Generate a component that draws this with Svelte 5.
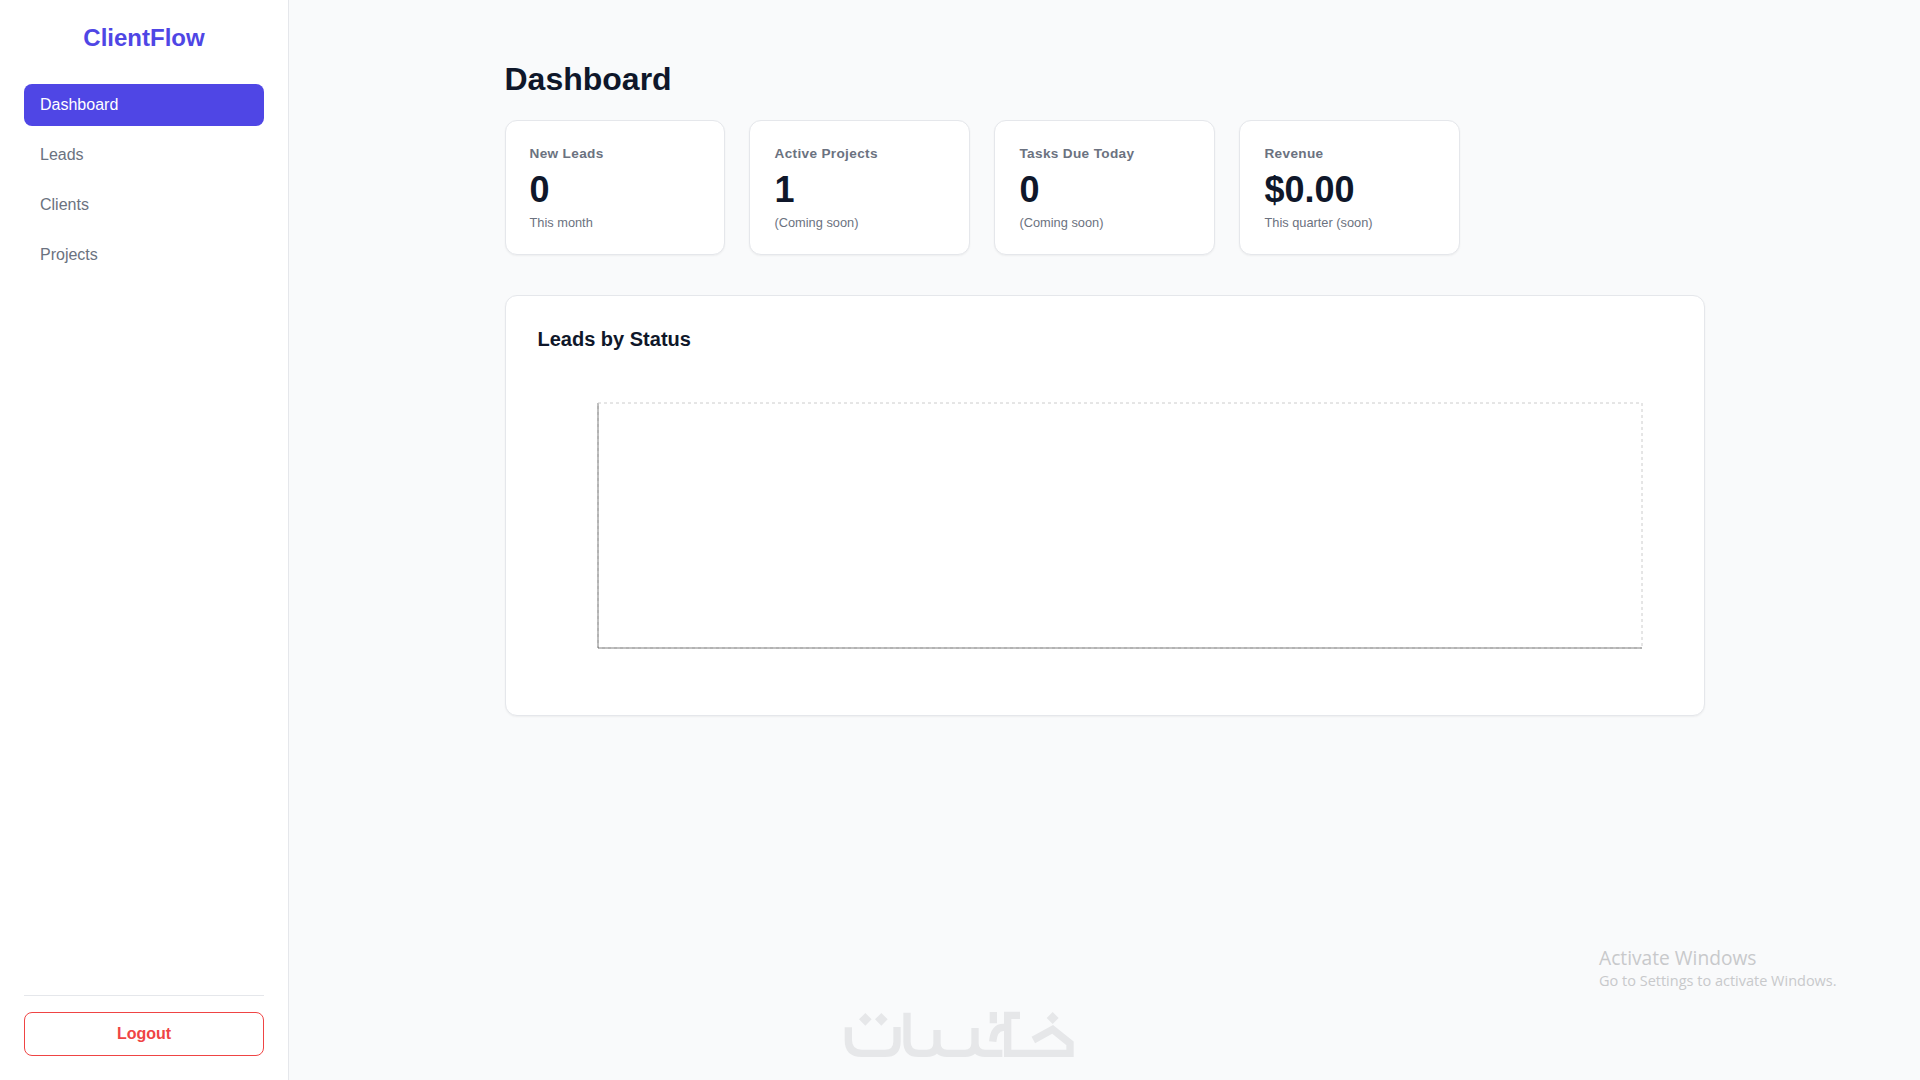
<script>
  const stats = [
    { label: "New Leads", value: "0", note: "This month" },
    { label: "Active Projects", value: "1", note: "(Coming soon)" },
    { label: "Tasks Due Today", value: "0", note: "(Coming soon)" },
    { label: "Revenue", value: "$0.00", note: "This quarter (soon)" },
  ];
  const links = ["Dashboard", "Leads", "Clients", "Projects"];
  let current = "Dashboard";
</script>

<div class="layout">
  <aside class="sidebar">
    <div class="brand">ClientFlow</div>
    <nav class="nav">
      {#each links as link}
        <a href="#{link}" class:active={link === current} on:click|preventDefault={() => (current = link)}>{link}</a>
      {/each}
    </nav>
    <div class="sidebar-foot">
      <button class="logout">Logout</button>
    </div>
  </aside>

  <main class="main">
    <div class="content">
      <h1>Dashboard</h1>
      <div class="stats">
        {#each stats as s}
          <div class="card">
            <div class="label">{s.label}</div>
            <div class="value">{s.value}</div>
            <div class="note">{s.note}</div>
          </div>
        {/each}
      </div>
      <section class="panel">
        <h2>Leads by Status</h2>
        <svg class="chart" width="1134" height="300" viewBox="0 0 1134 300">
          <path d="M60 5V250H1104" fill="none" stroke="#666" />
          <path d="M60 5H1104V250M60 5V250H1104" fill="none" stroke="#ccc" stroke-dasharray="3 3" />
        </svg>
      </section>
    </div>
  </main>

  <!-- watermark logo -->
  <svg class="khamsat" width="270" height="90" viewBox="0 0 810 270" role="img" aria-label="Khamsat">
    <g fill="none" stroke="#e6e7e9" stroke-width="22">
      <path d="M85 112V150Q85 190 125 190H195Q231 190 231 155V111" />
      <path d="M261 68V155Q261 190 296 190H320Q351 190 351 160V120V160Q351 190 381 190H435Q465 190 465 160V114V160Q465 190 495 190H547" />
      <path d="M520 66V100M565 112H550Q522 112 518 155" />
      <path d="M600 76H563V190H750V160L698 118L640 150" />
    </g>
    <g fill="#e6e7e9">
      <path d="M136 69l19 19-19 19-19-19zM184 69l19 19-19 19-19-19zM698 66l18 18-18 18-18-18z" />
    </g>
  </svg>
  <div class="activate">
    <div class="a1">Activate Windows</div>
    <div class="a2">Go to Settings to activate Windows.</div>
  </div>
</div>

<style>
  :global(body) {
    margin: 0;
    font-family: "Liberation Sans", Arial, sans-serif;
  }
  .layout {
    display: flex;
    height: 1080px;
    background: #f9fafb;
    position: relative;
    overflow: hidden;
  }
  .sidebar {
    width: 240px;
    background: #fff;
    border-right: 1px solid #e5e7eb;
    padding: 22px 24px 24px;
    display: flex;
    flex-direction: column;
  }
  .brand {
    font-size: 24px;
    line-height: 32px;
    font-weight: 700;
    color: #4f46e5;
    text-align: center;
    margin-bottom: 30px;
  }
  .nav {
    display: flex;
    flex-direction: column;
    gap: 8px;
    flex: 1;
  }
  .nav a {
    display: block;
    height: 42px;
    line-height: 42px;
    padding: 0 16px;
    border-radius: 8px;
    font-size: 16px;
    color: #6b7280;
    text-decoration: none;
  }
  .nav a.active {
    background: #4f46e5;
    color: #fff;
  }
  .sidebar-foot {
    border-top: 1px solid #e5e7eb;
    padding-top: 16px;
  }
  .logout {
    display: block;
    width: 100%;
    height: 44px;
    background: #fff;
    border: 1px solid #ef4444;
    border-radius: 8px;
    color: #ef4444;
    font: 700 16px "Liberation Sans", Arial, sans-serif;
  }
  .main {
    flex: 1;
    display: flex;
    justify-content: center;
  }
  .content {
    width: 1200px;
    padding-top: 59px;
  }
  h1 {
    margin: 0 0 21px;
    font-size: 32px;
    line-height: 40px;
    font-weight: 700;
    color: #0f172a;
  }
  .stats {
    display: flex;
    gap: 24.6px;
    margin-bottom: 40px;
  }
  .card {
    width: 220.4px;
    height: 135px;
    box-sizing: border-box;
    padding: 24px;
    background: #fff;
    border: 1px solid #e5e7eb;
    border-radius: 12px;
    box-shadow: 0 1px 2px rgba(0, 0, 0, 0.05);
  }
  .label {
    font-size: 13.6px;
    line-height: 17px;
    letter-spacing: 0.34px;
    font-weight: 700;
    color: #6b7280;
  }
  .value {
    font-size: 36px;
    line-height: 40px;
    font-weight: 700;
    color: #0f172a;
    margin: 8px 0 4px;
  }
  .note {
    font-size: 12.8px;
    line-height: 18px;
    color: #6b7280;
  }
  .panel {
    height: 421px;
    box-sizing: border-box;
    padding: 32px;
    background: #fff;
    border: 1px solid #e5e7eb;
    border-radius: 12px;
    box-shadow: 0 1px 2px rgba(0, 0, 0, 0.05);
  }
  h2 {
    margin: 0 0 48px;
    font-size: 20px;
    line-height: 22px;
    font-weight: 700;
    color: #0f172a;
  }
  .chart {
    display: block;
  }
  .khamsat {
    position: absolute;
    left: 820px;
    top: 990px;
  }
  .activate {
    position: absolute;
    left: 1599px;
    top: 945px;
    font-family: "Open Sans", sans-serif;
    color: #c8c9cb;
  }
  .a1 {
    font-size: 19.2px;
    line-height: 26px;
  }
  .a2 {
    font-size: 14.5px;
    line-height: 19px;
  }
</style>
